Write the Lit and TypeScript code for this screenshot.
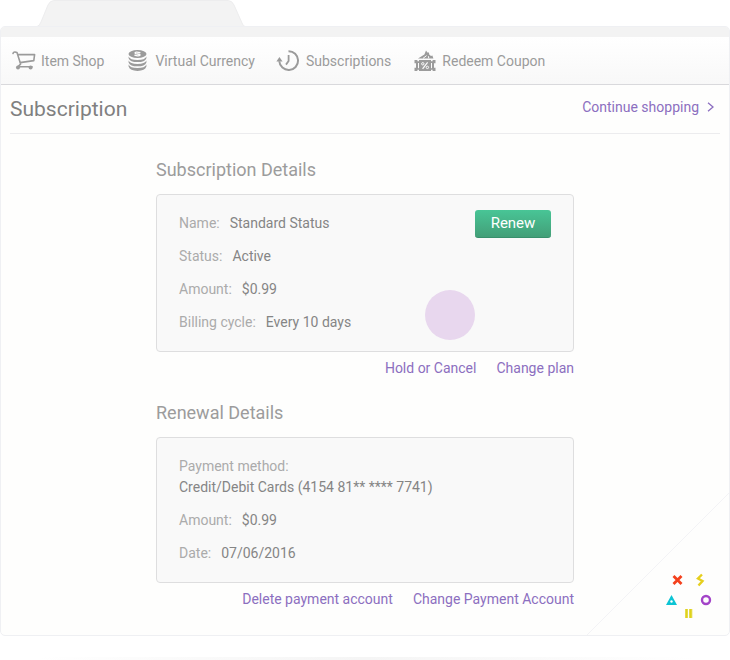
import { LitElement, html, css, svg } from "lit";
import { customElement } from "lit/decorators.js";

const cartIcon = svg`
  <path d="M0 3.400 Q0.600 1.800 2 2 L4 2.600 L7.600 14 Q6.600 15.500 4.600 16.800 M4.800 4.600 H21.600 L20.800 10.600 L7 12.600 M4.600 16.800 H19"
    fill="none" stroke="currentColor" stroke-width="1.600" stroke-linejoin="round" stroke-linecap="round"/>
  <circle cx="5" cy="17.400" r="2" fill="currentColor"/>
  <circle cx="17.600" cy="17.400" r="2" fill="currentColor"/>`;

const coinsIcon = svg`
  <ellipse cx="10.500" cy="4" rx="9" ry="4" fill="currentColor"/>
  <path d="M13.4 2.6 Q8 1.4 8 3.1 Q8.4 4 10.6 4 Q13.4 4.2 13 5.2 Q11.6 6.4 7.4 5.2" fill="none" stroke="#fcfcfc" stroke-width="1.300"/>
  <path d="M1.6 6.4 Q3 9.9 10.5 9.9 Q18 9.9 19.4 6.4 L19.4 8.2 Q18 12.1 10.5 12.1 Q3 12.1 1.6 8.2Z
           M1.6 10.6 Q3 14 10.5 14 Q18 14 19.4 10.6 L19.4 12.4 Q18 16.3 10.5 16.3 Q3 16.3 1.6 12.4Z
           M1.6 14.6 Q3 18.1 10.5 18.1 Q18 18.1 19.4 14.6 L19.4 16.6 Q18 20.9 10.5 20.9 Q3 20.9 1.6 16.6Z" fill="currentColor"/>`;

const clockIcon = svg`
  <path d="M10.500 1.200 A9.400 9.400 0 1 1 1.300 11.200" fill="none" stroke="currentColor" stroke-width="2"/>
  <path d="M10.600 5 V11 L8 14.600" fill="none" stroke="currentColor" stroke-width="1.800"/>
  <path d="M-1.600 11.600 L1.400 7 L4.600 11.600Z" fill="currentColor"/>`;

const couponIcon = svg`
  <path d="M4 8.400 L10.400 4.600 L12 0.600 L13.400 2.400 L15 2.600 L15.200 4.600 L17 6 L18.400 5.600 L19.400 8.400Z" fill="currentColor"/>
  <path d="M9 8.400 L12.600 5.600 M14.800 8.400 L14.400 6.200" stroke="#fcfcfc" stroke-width="1"/>
  <path d="M0.500 10 H3.400 V11.200 H5 V10 H17 V11.200 H18.600 V10 H21.500 V13.200 H20 V17.800 H21.500 V21 H18.600 V19.800 H17 V21 H5 V19.800 H3.400 V21 H0.500 V17.800 H2 V13.200 H0.500Z" fill="currentColor"/>
  <path d="M4.500 13 V18.200 M17.500 13 V18.200" stroke="#fcfcfc" stroke-width="1"/>
  <path d="M13.600 12.400 L8.600 18.800" stroke="#fcfcfc" stroke-width="1.200"/>
  <circle cx="8.800" cy="13.800" r="1.200" fill="none" stroke="#fcfcfc"/>
  <circle cx="13.400" cy="17.400" r="1.200" fill="none" stroke="#fcfcfc"/>`;

const navItems = [
  { label: "Item Shop", icon: cartIcon },
  { label: "Virtual Currency", icon: coinsIcon },
  { label: "Subscriptions", icon: clockIcon },
  { label: "Redeem Coupon", icon: couponIcon },
];

const subscription = [
  ["Name:", "Standard Status"],
  ["Status:", "Active"],
  ["Amount:", "$0.99"],
  ["Billing cycle:", "Every 10 days"],
];

const renewal = [
  ["Amount:", "$0.99"],
  ["Date:", "07/06/2016"],
];

@customElement("app-root")
export class AppRoot extends LitElement {
  static styles = css`
    :host {
      display: block;
      box-sizing: border-box;
      min-height: 100vh;
      background: #fff;
      color: #8a8a8a;
      font: 14px/21px Roboto, sans-serif;
    }
    *, *::before { box-sizing: border-box; }
    h1, h2, dl, dd { margin: 0; font-weight: 400; }
    a { color: #8c6fc0; text-decoration: none; }
    .tab { display: block; margin-left: 37px; width: 208px; height: 27px; position: relative; }
    .window {
      margin-top: -1px;
      position: relative;
      border: 1px solid #eff0f3;
      border-radius: 5px;
      background: #fefefd;
      overflow: hidden;
      padding-bottom: 25px;
    }
    .strip { height: 10px; background: #f3f3f3; }
    .nav {
      display: flex;
      align-items: center;
      gap: 23px;
      height: 48px;
      padding: 1px 12px 0;
      border-bottom: 1px solid #d9d9dc;
      background: linear-gradient(#fff, #f8f8f8);
    }
    .nav a { display: flex; align-items: center; gap: 6px; color: #9b9b9b; }
    .nav svg { width: 22px; height: 22px; overflow: visible; }
    .title {
      display: flex;
      justify-content: space-between;
      margin: 0 9px;
      height: 49px;
      border-bottom: 1px solid #ececee;
    }
    .title h1 { font-size: 21px; line-height: 48px; color: #808080; }
    .continue { display: flex; align-items: center; gap: 8px; height: 44px; padding-right: 6px; }
    .continue svg { width: 7px; height: 10px; }
    .content { max-width: 418px; margin: 24px auto 0; }
    h2 { font-size: 18px; line-height: 24px; margin-bottom: 12px; color: #9c9c9c; }
    .card {
      position: relative;
      display: flex;
      justify-content: space-between;
      align-items: flex-start;
      padding: 18px 22px;
      border: 1px solid #dededf;
      border-radius: 4px;
      background: #f9f9f9;
    }
    dl { display: grid; gap: 12px; }
    .row { display: flex; gap: 10px; }
    .stacked { display: block; }
    dt { color: #ababab; }
    dd { color: #858585; }
    .renew {
      width: 76px;
      height: 28px;
      margin-top: -3px;
      padding: 0 0 1px;
      border: 0;
      border-radius: 3px;
      border-bottom: 1px solid #38906c;
      background: linear-gradient(#48c596, #439f78);
      color: #fff;
      font: inherit;
      font-size: 15px;
    }
    .pointer {
      position: absolute;
      right: 98px;
      bottom: 11px;
      width: 50px;
      height: 50px;
      border-radius: 50%;
      background: #e8d7ee;
    }
    .links { display: flex; justify-content: flex-end; gap: 20px; margin-top: 6px; }
    section + section { margin-top: 22px; }
    .corner { position: absolute; right: 0; bottom: 0; width: 144px; height: 144px; }
    .shade {
      height: 3px;
      margin: 21px 36px 0;
      background: linear-gradient(90deg, #fff, #f5f5f5 50%, #fff);
    }
  `;

  private rows(items: string[][]) {
    return items.map(([k, v]) => html`<div class="row"><dt>${k}</dt><dd>${v}</dd></div>`);
  }

  render() {
    return html`
      <svg class="tab" viewBox="0 0 208 27" aria-hidden="true">
        <path d="M0 27 Q2.500 26 4 22 L11 5 Q13 0.500 17 0.500 H191 Q195 0.500 197 5 L205 23 Q206 26 208 27Z" fill="#f3f3f3"/>
        <path d="M0 26.500 Q2.500 26 4 22 L11 5 Q13 0.500 17 0.500 H191 Q195 0.500 197 5 L205 23 Q206 26 208 26.500" fill="none" stroke="#ededee"/>
      </svg>
      <main class="window">
        <div class="strip"></div>
        <nav class="nav">
          ${navItems.map(
            (n) => html`<a href="#"><svg viewBox="0 0 22 22" aria-hidden="true">${n.icon}</svg>${n.label}</a>`
          )}
        </nav>
        <header class="title">
          <h1>Subscription</h1>
          <a class="continue" href="#">Continue shopping
            <svg viewBox="0 0 7 10" aria-hidden="true"><path d="M1 0.700 L6 5 L1 9.300" fill="none" stroke="currentColor" stroke-width="1.300"/></svg>
          </a>
        </header>
        <div class="content">
          <section>
            <h2>Subscription Details</h2>
            <div class="card">
              <dl>${this.rows(subscription)}</dl>
              <button class="renew" type="button">Renew</button>
              <span class="pointer"></span>
            </div>
            <div class="links"><a href="#">Hold or Cancel</a><a href="#">Change plan</a></div>
          </section>
          <section>
            <h2>Renewal Details</h2>
            <div class="card">
              <dl>
                <div class="stacked"><dt>Payment method:</dt><dd>Credit/Debit Cards (4154 81** **** 7741)</dd></div>
                ${this.rows(renewal)}
              </dl>
            </div>
            <div class="links"><a href="#">Delete payment account</a><a href="#">Change Payment Account</a></div>
          </section>
        </div>
        <svg class="corner" viewBox="585 491 144 144" aria-hidden="true">
          <path d="M585 637 L731 491" stroke="#f3f3f6" fill="none"/>
          <path d="M673.500 576 L681.500 584 M681.500 576 L673.500 584" stroke="#f4401c" stroke-width="2.800"/>
          <path d="M702 574.500 L698 578.500 L702.500 581 L698.500 585.500" stroke="#e6cf1e" stroke-width="2.400" fill="none"/>
          <path d="M671.500 595 L677 605 H666Z" fill="#0cc4d4"/>
          <circle cx="671.500" cy="601.500" r="1.200" fill="#fff"/>
          <circle cx="706" cy="600" r="4" stroke="#a344c8" stroke-width="2.400" fill="none"/>
          <path d="M686.500 609 V618 M690.500 609 V618" stroke="#dfd21c" stroke-width="2.600"/>
          <path d="M692 609.500 V618" stroke="#dfd21c" stroke-width="1" stroke-dasharray="1 1"/>
        </svg>
      </main>
      <div class="shade"></div>
    `;
  }
}
